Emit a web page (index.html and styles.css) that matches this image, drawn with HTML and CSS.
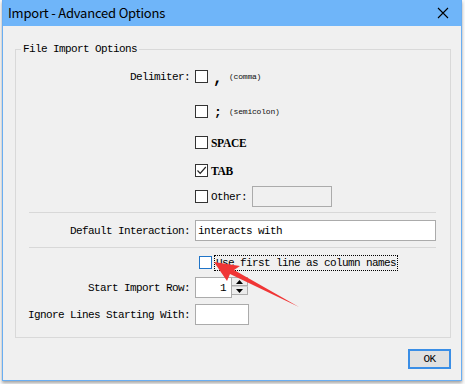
FILE: index.html
```html
<!DOCTYPE html>
<html>
<head>
<meta charset="utf-8">
<link rel="stylesheet" href="styles.css">
</head>
<body>
<div class="window">
  <div class="titlebar">
    <span class="title">Import - Advanced Options</span>
    <svg class="close" width="12" height="12" viewBox="0 0 12 12"><path d="M1 1 L11 11 M11 1 L1 11" stroke="#000" stroke-width="1.1" fill="none"/></svg>
  </div>
  <div class="client">
    <fieldset class="group">
      <legend>File Import Options</legend>
      <div class="row r1">
        <span class="label">Delimiter:</span>
        <span class="box"></span>
        <span class="sym">,</span>
        <span class="hint">(comma)</span>
      </div>
      <div class="row r2">
        <span class="label"></span>
        <span class="box"></span>
        <span class="sym semi">;</span>
        <span class="hint">(semicolon)</span>
      </div>
      <div class="row r3">
        <span class="label"></span>
        <span class="box"></span>
        <span class="strong">SPACE</span>
      </div>
      <div class="row r4">
        <span class="label"></span>
        <span class="box"><svg width="11" height="11" viewBox="0 0 11 11"><path d="M1.5 5.5 L4.2 8.3 L9.8 2" stroke="#222" stroke-width="1.2" fill="none"/></svg></span>
        <span class="strong">TAB</span>
      </div>
      <div class="row r5">
        <span class="label"></span>
        <span class="box"></span>
        <span class="other">Other:</span>
        <span class="field disabled"></span>
      </div>
      <div class="sep s1"></div>
      <div class="row r6">
        <span class="label">Default Interaction:</span>
        <span class="field wide">interacts with</span>
      </div>
      <div class="sep s2"></div>
      <div class="row r7">
        <span class="label"></span>
        <span class="box focus"></span>
        <span class="focusText">Use first line as column names</span>
      </div>
      <div class="row r8">
        <span class="label">Start Import Row:</span>
        <span class="field num">1</span>
        <span class="spin">
          <span class="spinBtn"><svg width="7" height="4" viewBox="0 0 7 4"><path d="M0 4 L3.5 0 L7 4Z" fill="#000"/></svg></span>
          <span class="spinBtn"><svg width="7" height="4" viewBox="0 0 7 4"><path d="M0 0 L3.5 4 L7 0Z" fill="#000"/></svg></span>
        </span>
      </div>
      <div class="row r9">
        <span class="label">Ignore Lines Starting With:</span>
        <span class="field small"></span>
      </div>
    </fieldset>
    <div class="buttons">
      <button class="ok">OK</button>
    </div>
  </div>
</div>
<svg class="arrow" width="465" height="384" viewBox="0 0 465 384">
  <polygon points="214,262 240,266 234,270 299,307 230,274 227,281" fill="#f03535"/>
</svg>
</body>
</html>
```

FILE: styles.css
```css
html, body {
  margin: 0;
  padding: 0;
}
body {
  width: 465px;
  height: 384px;
  background: #fafafa;
  position: relative;
  overflow: hidden;
  font-family: "Liberation Mono", "DejaVu Sans Mono", monospace;
  font-size: 11px;
  letter-spacing: -0.6px;
  color: #000;
}
.window {
  margin-left: 2px;
  width: 458px;
  height: 380px;
  border: 1px solid #6aaef2;
  border-top: 0;
  background: #f0f0f0;
  box-shadow: 0 2px 3px rgba(0,0,0,0.35);
  display: flex;
  flex-direction: column;
}
.titlebar {
  height: 26px;
  background: #6fb5f9;
  display: flex;
  align-items: center;
  justify-content: space-between;
  padding: 0 12px 0 5px;
  flex: none;
}
.title {
  font-family: "Noto Sans CJK SC", "Noto Sans", sans-serif;
  font-size: 13px;
  letter-spacing: -0.2px;
  color: #000;
  margin-top: -1px;
}
.close {
  display: block;
}
.client {
  flex: 1;
  padding: 0 10px 0 12px;
  display: flex;
  flex-direction: column;
}
.group {
  margin: 17px 0 0 0;
  padding: 5px 0 12px 0;
  border: 1px solid #d9d9d9;
  min-width: 0;
}
.group legend {
  margin-left: 5px;
  padding: 0 2px;
  line-height: 12px;
}
.row {
  display: flex;
  align-items: center;
}
.label {
  width: 174px;
  margin-right: 5px;
  text-align: right;
  flex: none;
}
.r1 { height: 33px; }
.r2 { height: 37px; }
.r3 { height: 25px; }
.r4 { height: 31px; }
.r5 { height: 21px; }
.r6 { height: 21px; }
.r7 { height: 15px; }
.r8 { height: 21px; margin-top: 7px; }
.r9 { height: 21px; margin-top: 6px; }
.sep {
  margin-left: 13px;
  width: 407px;
  height: 0;
  border-top: 1px solid #d8d8d8;
}
.s1 { margin-top: 5px; margin-bottom: 7px; }
.s2 { margin-top: 6px; margin-bottom: 7px; }
.box {
  width: 11px;
  height: 11px;
  border: 1px solid #333;
  background: #fff;
  flex: none;
  display: flex;
  align-items: center;
  justify-content: center;
}
.box.focus {
  border-color: #1f74c8;
  margin-left: 4px;
}
.sym {
  font-weight: bold;
  font-size: 16px;
  margin-left: 5px;
  width: 12px;
  line-height: 1;
  margin-top: 4px;
}
.sym.semi {
  margin-left: 6px;
  width: 11px;
  font-size: 13px;
  margin-top: 2px;
}
.hint {
  font-size: 8px;
  letter-spacing: -0.2px;
  margin-left: 4px;
  color: #111;
}
.strong {
  font-weight: bold;
  font-size: 11.5px;
  letter-spacing: -0.3px;
  margin-left: 3px;
  font-family: "Liberation Serif", serif;
}
.other {
  margin-left: 3px;
  width: 40px;
}
.field {
  height: 19px;
  border: 1px solid #ababab;
  background: #fff;
  box-sizing: content-box;
  display: flex;
  align-items: center;
  flex: none;
}
.field.disabled {
  width: 78px;
  background: #f0f0f0;
  margin-left: 1px;
}
.field.wide {
  width: 237px;
  padding-left: 2px;
  height: 19px;
}
.field.num {
  width: 30px;
  padding-right: 5px;
  justify-content: flex-end;
}
.field.small {
  width: 52px;
}
.focusText {
  margin-left: 3px;
  outline: 1px dotted #000;
  padding: 0 1px;
  line-height: 14px;
}
.spin {
  display: flex;
  flex-direction: column;
  align-self: flex-start;
  flex: none;
}
.spinBtn {
  box-sizing: border-box;
  width: 16px;
  height: 9px;
  border: 1px solid #adadad;
  border-left: 0;
  background: #ececec;
  display: flex;
  align-items: center;
  justify-content: center;
}
.spinBtn + .spinBtn {
  border-top: 1px solid #d0d0d0;
}
.buttons {
  display: flex;
  justify-content: flex-end;
  margin-top: 11px;
}
.ok {
  width: 43px;
  height: 20px;
  margin-right: 0;
  border: 2px solid #3a8ee6;
  background: #e1e1e1;
  font-family: "Liberation Mono", monospace;
  font-size: 11px;
  letter-spacing: -0.6px;
  padding: 0;
  color: #000;
}
.arrow {
  position: absolute;
  left: 0;
  top: 0;
  pointer-events: none;
}
```
